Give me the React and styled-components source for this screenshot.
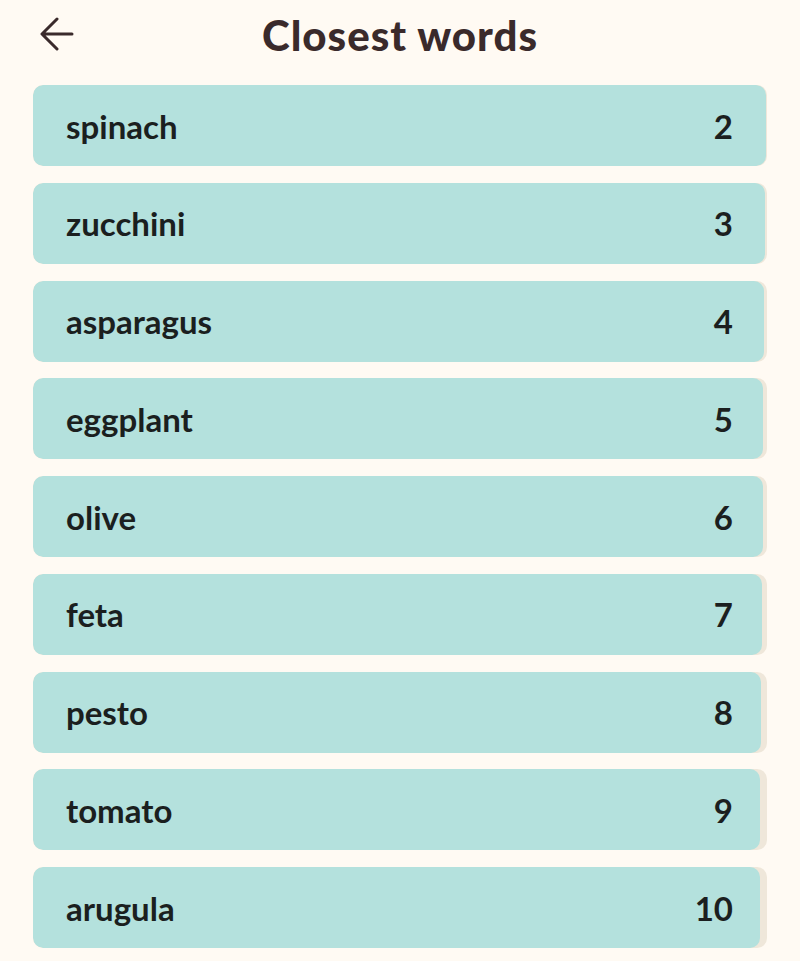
import React from "react";
import styled, { createGlobalStyle } from "styled-components";

const words = [
  { word: "spinach", rank: 2, width: 733 },
  { word: "zucchini", rank: 3, width: 732 },
  { word: "asparagus", rank: 4, width: 731 },
  { word: "eggplant", rank: 5, width: 730 },
  { word: "olive", rank: 6, width: 729.5 },
  { word: "feta", rank: 7, width: 729 },
  { word: "pesto", rank: 8, width: 728 },
  { word: "tomato", rank: 9, width: 727 },
  { word: "arugula", rank: 10, width: 726.5 },
];

const TRACK = 734;

function BackArrow() {
  return (
    <svg width="34" height="34" viewBox="0 0 34 34" fill="none">
      <path
        d="M32 17H4M17 2L2 17L17 32"
        stroke="#3a2a2b"
        strokeWidth="3"
        strokeLinecap="round"
        strokeLinejoin="round"
      />
    </svg>
  );
}

export default function App() {
  return (
    <>
      <Global />
      <Page>
        <Header>
          <Back aria-label="Back">
            <BackArrow />
          </Back>
          <Title>Closest words</Title>
        </Header>

        <List>
          {words.map((w) => (
            <Row key={w.word}>
              <Fill style={{ width: `${(w.width / TRACK) * 100}%` }} />
              <Word>{w.word}</Word>
              <Rank>{w.rank}</Rank>
            </Row>
          ))}
        </List>
      </Page>
    </>
  );
}

const Global = createGlobalStyle`
  body {
    margin: 0;
    background: #fffaf3;
    font-family: Lato, "Noto Sans", sans-serif;
  }
`;

const Page = styled.div`
  width: 800px;
  min-height: 961px;
  background: #fffaf3;
`;

const Header = styled.div`
  height: 85px;
  display: flex;
  align-items: center;
  justify-content: center;
  position: relative;
`;

const Back = styled.button`
  position: absolute;
  left: 40px;
  top: 17px;
  padding: 0;
  border: 0;
  background: none;
  display: flex;
`;

const Title = styled.h1`
  margin: -16px 0 0;
  font-size: 42px;
  font-weight: 900;
  color: #3a2a2b;
  letter-spacing: 1px;
`;

const List = styled.div`
  display: flex;
  flex-direction: column;
  gap: 16.75px;
  padding: 0 33px;
`;

const Row = styled.div`
  position: relative;
  height: 81px;
  border-radius: 10px;
  background: #efe7da;
  display: flex;
  align-items: center;
  justify-content: space-between;
  padding: 0 34px 0 33px;
  overflow: hidden;
`;

const Fill = styled.div`
  position: absolute;
  left: 0;
  top: 0;
  bottom: 0;
  border-radius: 10px;
  background: #b4e1dd;
`;

const Word = styled.span`
  position: relative;
  font-size: 33px;
  font-weight: 700;
  color: #1b1f1f;
`;

const Rank = styled(Word)``;
